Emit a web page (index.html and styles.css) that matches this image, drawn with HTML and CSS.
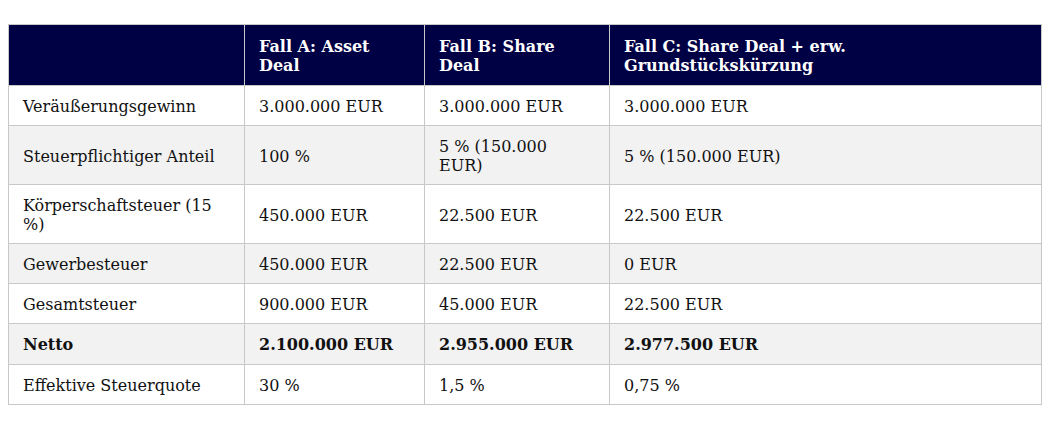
FILE: index.html
```html
<!DOCTYPE html>
<html lang="de">
<head>
<meta charset="utf-8">
<link rel="stylesheet" href="styles.css">
</head>
<body>
<table class="cmp">
  <thead>
    <tr>
      <th class="c1"></th>
      <th class="c2">Fall A: Asset Deal</th>
      <th class="c3">Fall B: Share Deal</th>
      <th class="c4">Fall C: Share Deal + erw. Grundstückskürzung</th>
    </tr>
  </thead>
  <tbody>
    <tr><td>Veräußerungsgewinn</td><td>3.000.000 EUR</td><td>3.000.000 EUR</td><td>3.000.000 EUR</td></tr>
    <tr><td>Steuerpflichtiger Anteil</td><td>100 %</td><td>5 % (150.000 EUR)</td><td>5 % (150.000 EUR)</td></tr>
    <tr><td>Körperschaftsteuer (15 %)</td><td>450.000 EUR</td><td>22.500 EUR</td><td>22.500 EUR</td></tr>
    <tr><td>Gewerbesteuer</td><td>450.000 EUR</td><td>22.500 EUR</td><td>0 EUR</td></tr>
    <tr><td>Gesamtsteuer</td><td>900.000 EUR</td><td>45.000 EUR</td><td>22.500 EUR</td></tr>
    <tr class="net"><td>Netto</td><td>2.100.000 EUR</td><td>2.955.000 EUR</td><td>2.977.500 EUR</td></tr>
    <tr><td>Effektive Steuerquote</td><td>30 %</td><td>1,5 %</td><td>0,75 %</td></tr>
  </tbody>
</table>
</body>
</html>
```

FILE: styles.css
```css
body {
  margin: 8px;
  font-family: "DejaVu Serif", serif;
  background: #fff;
  color: #111;
}
.cmp {
  width: 100%;
  margin-top: 16px;
  border-collapse: collapse;
  font-size: 16px;
  line-height: 19px;
  table-layout: fixed;
}
.cmp th, .cmp td {
  border: 1px solid #c8c8c8;
  padding: 11px 14px 9px;
  text-align: left;
  vertical-align: middle;
}
.cmp th {
  background: #000044;
  color: #fff;
  font-weight: bold;
  padding-top: 12px;
  padding-bottom: 10px;
}
.c1 { width: 207px; }
.c2 { width: 151px; }
.c3 { width: 156px; }
.cmp tbody tr:nth-child(even) td { background: #f2f2f2; }
.cmp .net td { font-weight: bold; padding-bottom: 10px; }
```
